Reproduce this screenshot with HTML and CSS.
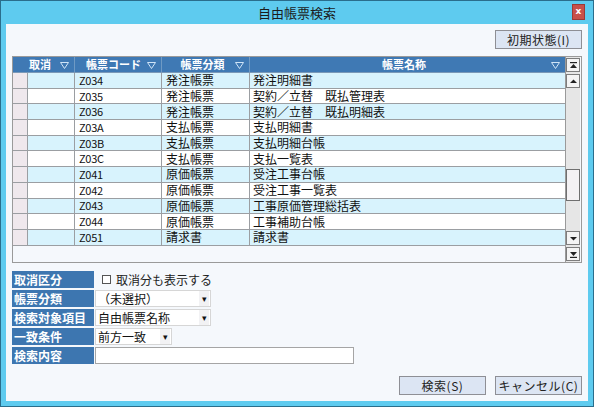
FILE: index.html
```html
<!DOCTYPE html>
<html lang="ja">
<head>
<meta charset="utf-8">
<link rel="stylesheet" href="styles.css">
</head>
<body>
<div class="window">
  <div class="titlebar">
    <span class="title">自由帳票検索</span>
    <span class="close">x</span>
  </div>
  <div class="client">
    <div class="toprow"><button class="btn reset">初期状態(I)</button></div>
    <div class="grid">
      <div class="table">
        <div class="hrow">
          <div class="c sel"></div>
          <div class="c cancel h-left">取消<svg class="filt" viewBox="0 0 9 7"><path d="M0.5 0.5H8.5L4.5 6.5Z" fill="none" stroke="#cfe4f7" stroke-width="1"/></svg></div>
          <div class="c code h-left">帳票コード<svg class="filt" viewBox="0 0 9 7"><path d="M0.5 0.5H8.5L4.5 6.5Z" fill="none" stroke="#cfe4f7" stroke-width="1"/></svg></div>
          <div class="c cls h-center">帳票分類<svg class="filt" viewBox="0 0 9 7"><path d="M0.5 0.5H8.5L4.5 6.5Z" fill="none" stroke="#cfe4f7" stroke-width="1"/></svg></div>
          <div class="c name h-center">帳票名称<svg class="filt" viewBox="0 0 9 7"><path d="M0.5 0.5H8.5L4.5 6.5Z" fill="none" stroke="#cfe4f7" stroke-width="1"/></svg></div>
        </div>
        <div class="row alt"><div class="c sel"></div><div class="c cancel"></div><div class="c code">Z034</div><div class="c cls">発注帳票</div><div class="c name">発注明細書</div></div>
        <div class="row"><div class="c sel"></div><div class="c cancel"></div><div class="c code">Z035</div><div class="c cls">発注帳票</div><div class="c name">契約／立替　既払管理表</div></div>
        <div class="row alt"><div class="c sel"></div><div class="c cancel"></div><div class="c code">Z036</div><div class="c cls">発注帳票</div><div class="c name">契約／立替　既払明細表</div></div>
        <div class="row"><div class="c sel"></div><div class="c cancel"></div><div class="c code">Z03A</div><div class="c cls">支払帳票</div><div class="c name">支払明細書</div></div>
        <div class="row alt"><div class="c sel"></div><div class="c cancel"></div><div class="c code">Z03B</div><div class="c cls">支払帳票</div><div class="c name">支払明細台帳</div></div>
        <div class="row"><div class="c sel"></div><div class="c cancel"></div><div class="c code">Z03C</div><div class="c cls">支払帳票</div><div class="c name">支払一覧表</div></div>
        <div class="row alt"><div class="c sel"></div><div class="c cancel"></div><div class="c code">Z041</div><div class="c cls">原価帳票</div><div class="c name">受注工事台帳</div></div>
        <div class="row"><div class="c sel"></div><div class="c cancel"></div><div class="c code">Z042</div><div class="c cls">原価帳票</div><div class="c name">受注工事一覧表</div></div>
        <div class="row alt"><div class="c sel"></div><div class="c cancel"></div><div class="c code">Z043</div><div class="c cls">原価帳票</div><div class="c name">工事原価管理総括表</div></div>
        <div class="row"><div class="c sel"></div><div class="c cancel"></div><div class="c code">Z044</div><div class="c cls">原価帳票</div><div class="c name">工事補助台帳</div></div>
        <div class="row alt"><div class="c sel"></div><div class="c cancel"></div><div class="c code">Z051</div><div class="c cls">請求書</div><div class="c name">請求書</div></div>
      </div>
      <div class="vscroll">
        <div class="sbtn"><svg viewBox="0 0 7 7"><rect x="0" y="0" width="7" height="1.2" fill="#222"/><path d="M0 6H7L3.5 2Z" fill="#222"/></svg></div>
        <div class="sbtn"><svg viewBox="0 0 7 7"><path d="M0 5H7L3.5 1.5Z" fill="#222"/></svg></div>
        <div class="track"><div class="thumb"></div></div>
        <div class="sbtn"><svg viewBox="0 0 7 7"><path d="M0 2H7L3.5 5.5Z" fill="#222"/></svg></div>
        <div class="sbtn"><svg viewBox="0 0 7 7"><path d="M0 1H7L3.5 5Z" fill="#222"/><rect x="0" y="5.8" width="7" height="1.2" fill="#222"/></svg></div>
      </div>
    </div>
    <div class="form">
      <div class="frow"><div class="lbl">取消区分</div><div class="chk"><span class="box"></span>取消分も表示する</div></div>
      <div class="frow"><div class="lbl">帳票分類</div><div class="sel-box w116">（未選択）<span class="arr">▾</span></div></div>
      <div class="frow"><div class="lbl">検索対象項目</div><div class="sel-box w116">自由帳票名称<span class="arr">▾</span></div></div>
      <div class="frow"><div class="lbl">一致条件</div><div class="sel-box w77">前方一致<span class="arr">▾</span></div></div>
      <div class="frow"><div class="lbl">検索内容</div><div class="input"></div></div>
    </div>
    <div class="bottom">
      <button class="btn">検索(S)</button>
      <button class="btn">キャンセル(C)</button>
    </div>
  </div>
</div>
</body>
</html>
```

FILE: styles.css
```css
* { box-sizing: border-box; }
html, body { margin: 0; padding: 0; }
body {
  width: 594px;
  height: 407px;
  overflow: hidden;
  font-family: "Noto Sans CJK JP", "Noto Sans", sans-serif;
  font-size: 12px;
  color: #111;
}
.window {
  width: 594px;
  height: 407px;
  background: #5ecbef;
  border: 1px solid #2a6e8c;
  display: flex;
  flex-direction: column;
}
.titlebar {
  height: 23px;
  position: relative;
  display: flex;
  align-items: center;
  justify-content: center;
}
.title {
  font-size: 13px;
  color: #1c1c1c;
  margin-top: -1px;
}
.close {
  position: absolute;
  right: 8px;
  top: 3px;
  width: 13px;
  height: 16px;
  background: #c8504a;
  border: 1px solid #9c3a36;
  color: #fff;
  font-size: 9px;
  font-weight: bold;
  line-height: 13px;
  text-align: center;
  font-family: "DejaVu Sans", sans-serif;
}
.client {
  flex: 1;
  margin: 0 5px 5px 5px;
  background: #f5f8fc;
  padding: 6px;
  display: flex;
  flex-direction: column;
}
.toprow {
  display: flex;
  justify-content: flex-end;
  height: 18px;
}
.btn {
  font-family: "Noto Sans CJK JP", sans-serif;
  font-size: 12px;
  width: 87px;
  height: 19px;
  padding: 0;
  background: #dce5f3;
  border: 1px solid #8e8f95;
  color: #222;
  line-height: 16px;
  letter-spacing: 0.5px;
}
.grid {
  margin-top: 8px;
  height: 207px;
  border: 1px solid #9a9a9a;
  display: flex;
  background: #f5f8fc;
}
.table {
  width: 552px;
  display: flex;
  flex-direction: column;
}
.hrow {
  display: flex;
  height: 16px;
  background: #3f79b4;
  color: #fff;
  font-weight: bold;
  font-size: 11px;
  border-bottom: 1px solid #7a99b8;
}
.hrow .c {
  border-right: 1px solid #6f9ac4;
  position: relative;
}
.hrow .sel { border-right: none; }
.hrow .cancel { padding-left: 1px; }
.hrow .code { padding-left: 11px; }
.hrow .h-center { justify-content: center; padding-right: 10px; }
.filt {
  position: absolute;
  right: 5px;
  top: 5px;
  width: 9px;
  height: 7px;
}
.row {
  display: flex;
  height: 15.7px;
  background: #fff;
  border-bottom: 1px solid #9b9ea2;
}
.row.alt { background: #d8f3fd; }
.c {
  display: flex;
  align-items: center;
  white-space: nowrap;
  line-height: 1;
}
.row .c { border-right: 1px solid #9b9ea2; }
.sel { width: 15px; flex: none; }
.row .sel { background: #efe8ed; }
.cancel { width: 47px; flex: none; }
.code { width: 87px; flex: none; padding-left: 4px; font-size: 11px; letter-spacing: -0.3px; }
.cls { width: 88px; flex: none; padding-left: 4px; }
.name { width: 315px; flex: none; padding-left: 3px; }
.hrow .code { font-size: 11px; letter-spacing: 0; }
.hrow .name, .row .name { border-right: none; }
.vscroll {
  width: 15px;
  border-left: 1px solid #9a9a9a;
  display: flex;
  flex-direction: column;
  background: #e6e6e6;
}
.sbtn {
  height: 14px;
  background: #f4f4f4;
  border: 1px solid #7d7d7d;
  display: flex;
  align-items: center;
  justify-content: center;
  margin: 1px 0;
}
.sbtn svg { width: 7px; height: 7px; }
.track {
  flex: 1;
  position: relative;
  background: #e6e6e6;
}
.thumb {
  position: absolute;
  left: 0;
  right: 0;
  top: 80px;
  height: 32px;
  background: #f4f2f4;
  border: 1px solid #6f6f6f;
}
.form {
  margin-top: 8px;
  display: flex;
  flex-direction: column;
  gap: 2px;
}
.frow {
  display: flex;
  height: 17px;
  gap: 1px;
}
.lbl {
  width: 82px;
  background: #3d76b0;
  color: #fff;
  font-weight: bold;
  padding-left: 2px;
  line-height: 17px;
}
.chk {
  display: flex;
  align-items: center;
  padding-left: 7px;
  color: #222;
}
.box {
  width: 9px;
  height: 9px;
  border: 1px solid #555;
  background: #fff;
  margin-right: 5px;
}
.sel-box {
  background: #fff;
  border: 1px solid #d6d6d6;
  position: relative;
  padding-left: 2px;
  line-height: 15px;
}
.w116 { width: 116px; }
.w77 { width: 77px; }
.arr {
  position: absolute;
  right: 1px;
  top: 0;
  width: 10px;
  height: 15px;
  background: #f2f2f4;
  font-size: 9px;
  text-align: center;
  line-height: 15px;
}
.input {
  width: 259px;
  background: #fff;
  border: 1px solid #a5a5a5;
}
.bottom {
  margin-top: auto;
  display: flex;
  justify-content: flex-end;
  gap: 9px;
}
```
